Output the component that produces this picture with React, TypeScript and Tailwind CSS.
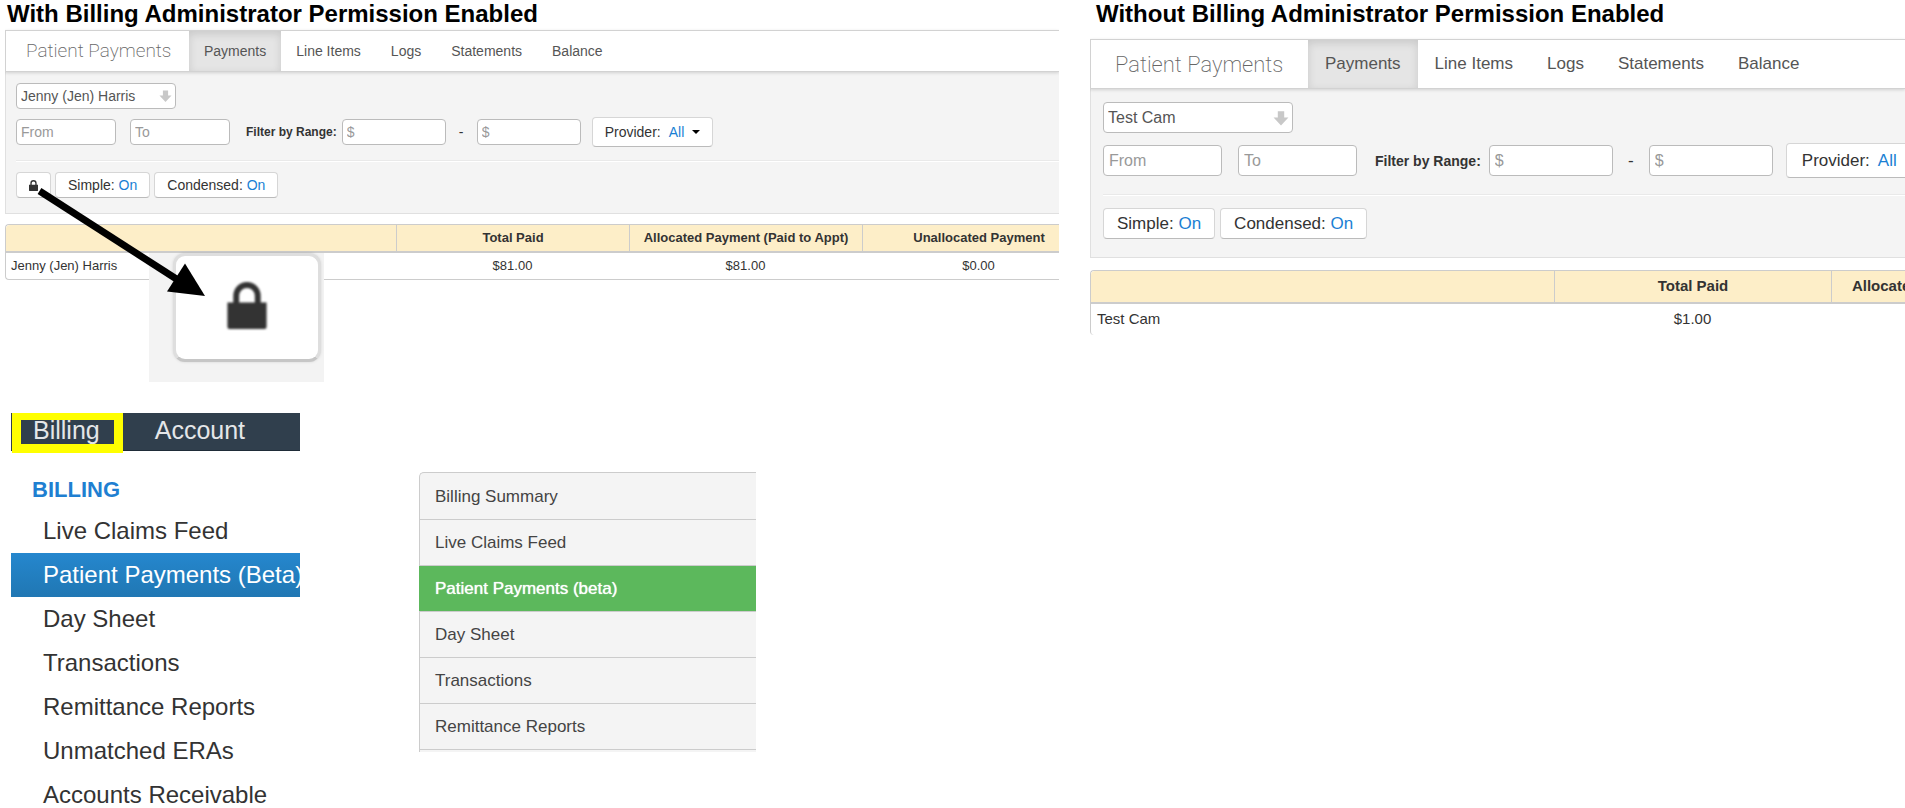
import { useId } from "react";

type Size = "sm" | "lg";

const styles = {
  sm: {
    heading: "pl-[2px] mb-[3px]",
    header: "h-[42px]",
    title: "w-[183px] pl-5 text-[19px]",
    tab: "px-[15px] text-sm",
    body: "px-[10px] pt-[11px] pb-[15px]",
    selectBox: "w-[160px]",
    select: "h-[26px] pl-1 text-sm",
    arrow: "right-1 size-[13px]",
    filters: "mt-2 h-[30px]",
    input: "h-[26px] pl-1 text-sm",
    date: "w-[100px] mr-[14px]",
    label: "ml-[2px] mr-[5px] text-xs",
    amount: "w-[104px]",
    dash: "w-[31px] text-sm",
    provider: "ml-[11px] h-[30px] px-3 text-sm",
    all: "ml-2 mr-2",
    rule: "mt-[13px]",
    buttons: "mt-[10px] gap-1",
    button: "h-[26px] px-[12px] text-sm",
    table: "mt-[10px] w-[1089px] border-b text-[13px]",
    first: "w-[390px] pl-[5px]",
    cell: "h-[26px]",
    col: "w-[233px]",
  },
  lg: {
    heading: "pl-[6px] mb-3",
    header: "h-[50px]",
    title: "w-[217px] pl-6 text-[22px]",
    tab: "px-[17px] text-[17px]",
    body: "px-3 pt-[13px] pb-[18px]",
    selectBox: "w-[190px]",
    select: "h-[31px] pl-1 text-[16px]",
    arrow: "right-1 size-4",
    filters: "mt-[10px] h-[35px]",
    input: "h-[31px] pl-[5px] text-[16px]",
    date: "w-[119px] mr-4",
    label: "ml-[2px] mr-2 text-sm",
    amount: "w-[124px]",
    dash: "w-[36px] text-[17px]",
    provider: "ml-[13px] h-[35px] px-[15px] text-[17px]",
    all: "ml-2 mr-[10px]",
    rule: "mt-4",
    buttons: "mt-3 gap-[5px]",
    button: "h-[31px] px-[13px] text-[17px]",
    table: "mt-3 w-[1294px] text-[15px]",
    first: "w-[463px] pl-[6px]",
    cell: "h-[31px]",
    col: "w-[277px]",
  },
};

const fieldClass =
  "rounded-[4px] border border-[#bbb] bg-white text-[#555] outline-none placeholder:text-[#999] placeholder:opacity-100";
const buttonClass =
  "flex shrink-0 items-center whitespace-nowrap rounded-[4px] border border-[#d6d6d6] border-b-[#bbb] bg-white text-[#333]";

function LockIcon({ className }: { className: string }) {
  return (
    <svg viewBox="0 0 40 48" className={className} aria-hidden="true">
      <path d="M9 24V14a11 11 0 0 1 22 0v10" fill="none" stroke="#333" strokeWidth="6" />
      <path d="M0 21h40v25a2 2 0 0 1-2 2H2a2 2 0 0 1-2-2z" fill="#333" />
    </svg>
  );
}

type PanelProps = {
  size: Size;
  heading: string;
  patient: string;
  total: string;
  allocated: string;
  unallocated: string;
  admin?: boolean;
};

function PaymentsPanel({ size, heading, patient, total, allocated, unallocated, admin }: PanelProps) {
  const s = styles[size];
  const id = useId();
  return (
    <section className="overflow-hidden">
      <h2 className={`${s.heading} whitespace-nowrap text-2xl leading-[27px] font-bold text-black`}>{heading}</h2>
      <div className={`${s.header} relative flex items-stretch border-y border-l border-[#d2d2d2] bg-white shadow-[0_1px_3px_rgba(0,0,0,0.15)]`}>
        <h3 className={`${s.title} flex shrink-0 items-center whitespace-nowrap font-['Roboto',sans-serif] font-extralight text-[#666]`}>
          Patient Payments
        </h3>
        <nav className="flex">
          {["Payments", "Line Items", "Logs", "Statements", "Balance"].map((tab, i) => (
            <a
              key={tab}
              href="#"
              className={`${s.tab} flex items-center whitespace-nowrap text-[#555] ${
                i === 0 ? "bg-[#e5e5e5] shadow-[inset_0_3px_8px_rgba(0,0,0,0.125)]" : ""
              }`}
            >
              {tab}
            </a>
          ))}
        </nav>
      </div>
      <div className={`${s.body} border-b border-l border-[#e0e0e0] bg-[#f4f4f4] pr-0`}>
        <div className={`${s.selectBox} relative`}>
          <select aria-label="Patient" className={`${fieldClass} ${s.select} block w-full appearance-none`}>
            <option>{patient}</option>
          </select>
          <svg viewBox="0 0 14 14" className={`${s.arrow} pointer-events-none absolute top-1/2 -translate-y-1/2`} aria-hidden="true">
            <path d="M4.200 1h5.600v5.500H13.500L7 13.500.5 6.500h3.700z" fill="#c8c8c8" />
          </svg>
        </div>
        <div className={`${s.filters} flex items-center`}>
          <input aria-label="From date" placeholder="From" className={`${fieldClass} ${s.input} ${s.date} shrink-0`} />
          <input aria-label="To date" placeholder="To" className={`${fieldClass} ${s.input} ${s.date} shrink-0`} />
          <label htmlFor={id} className={`${s.label} shrink-0 whitespace-nowrap font-bold text-[#333]`}>
            Filter by Range:
          </label>
          <input id={id} placeholder="$" className={`${fieldClass} ${s.input} ${s.amount} shrink-0`} />
          <span className={`${s.dash} shrink-0 text-center text-[#333]`}>-</span>
          <input aria-label="Maximum amount" placeholder="$" className={`${fieldClass} ${s.input} ${s.amount} shrink-0`} />
          <button type="button" className={`${buttonClass} ${s.provider}`}>
            Provider: <span className={`${s.all} text-[#1a7fd4]`}>All</span>
            <span className="border-x-4 border-t-4 border-x-transparent border-t-black" />
          </button>
        </div>
        <div className={`${s.rule} border-t border-b border-t-[#e9e9e9] border-b-white`} />
        <div className={`${s.buttons} flex`}>
          {admin && (
            <button type="button" aria-label="Lock" className={`${buttonClass} ${s.button}`}>
              <LockIcon className="h-[11px] w-[9px]" />
            </button>
          )}
          <button type="button" className={`${buttonClass} ${s.button}`}>
            Simple:&nbsp;<span className="text-[#1a7fd4]">On</span>
          </button>
          <button type="button" className={`${buttonClass} ${s.button}`}>
            Condensed:&nbsp;<span className="text-[#1a7fd4]">On</span>
          </button>
        </div>
      </div>
      <table className={`${s.table} table-fixed border-separate border-spacing-0 rounded-[4px] border-t border-l border-[#ccc] text-[#333]`}>
        <thead>
          <tr className="bg-[#fdeec8]">
            <th className={`${s.first} rounded-tl-[4px] border-b-2 border-[#ccc] py-0 pr-0`} />
            {["Total Paid", "Allocated Payment (Paid to Appt)", "Unallocated Payment"].map((name) => (
              <th key={name} className={`${s.col} border-b-2 border-l border-[#ccc] p-0 text-center font-bold whitespace-nowrap`}>
                <div className={`${s.cell} flex items-center justify-center`}>{name}</div>
              </th>
            ))}
          </tr>
        </thead>
        <tbody>
          <tr>
            <td className={`${s.first} ${s.cell} py-0 pr-0`}>{patient}</td>
            {[total, allocated, unallocated].map((value, i) => (
              <td key={i} className="p-0 text-center">{value}</td>
            ))}
          </tr>
        </tbody>
      </table>
    </section>
  );
}

function LockCallout() {
  return (
    <>
      <div className="absolute top-[253px] left-[149px] h-[129px] w-[175px] bg-[#f3f3f3] pl-[24px]">
        <div className="flex h-[109px] w-[148px] items-center justify-center rounded-[12px] border-[3px] border-[#dedede] border-b-[#c6c6c6] bg-white pb-[4px] shadow-[0_0_3px_rgba(0,0,0,0.12)]">
          <LockIcon className="h-[47px] w-[40px] blur-[1px]" />
        </div>
      </div>
      <svg viewBox="0 0 210 300" className="absolute top-0 left-0 h-[300px] w-[210px]" aria-label="Arrow to enlarged lock button">
        <path d="M39.500 191 178 280" stroke="#000" strokeWidth="7" fill="none" />
        <path d="M205 296 185 263.500 167 291.500z" fill="#000" />
      </svg>
    </>
  );
}

const billingItems = [
  "Live Claims Feed",
  "Patient Payments (Beta)",
  "Day Sheet",
  "Transactions",
  "Remittance Reports",
  "Unmatched ERAs",
  "Accounts Receivable",
];

function BillingDropdown() {
  return (
    <div className="w-[289px] shrink-0">
      <nav className="relative flex h-[38px] border-b border-[#1f2c38] bg-[#303f4d] text-[25px] leading-[35px] text-[#e4e6e8]">
        <a href="#" className="pl-[22px]">Billing</a>
        <a href="#" className="pl-[55px]">Account</a>
        <span className="absolute top-0 left-px h-10 w-[111px] border-x-[9px] border-t-[7px] border-b-[9px] border-[#ffff00]" />
      </nav>
      <h3 className="pt-[26px] pb-[6px] pl-[21px] text-[22px] leading-[26px] font-bold text-[#1f7fd1]">BILLING</h3>
      <ul>
        {billingItems.map((item, i) => (
          <li key={item} className="group">
            <a
              href="#"
              className={`block overflow-hidden py-[9px] pl-8 text-2xl leading-[26px] whitespace-nowrap group-last:pb-0 ${
                i === 1 ? "bg-linear-to-b from-[#2587ce] to-[#2077b3] text-white" : "text-[#333]"
              }`}
            >
              {item}
            </a>
          </li>
        ))}
      </ul>
    </div>
  );
}

const sideItems = [
  "Billing Summary",
  "Live Claims Feed",
  "Patient Payments (beta)",
  "Day Sheet",
  "Transactions",
  "Remittance Reports",
];

function BillingSideMenu() {
  return (
    <ul className="mt-[59px] w-[337px] shrink-0 self-start rounded-tl-[5px] border-t border-l border-[#ccc] bg-[#f4f4f4] pt-px pb-[2px]">
      {sideItems.map((item, i) => (
        <li
          key={item}
          className={
            i === 2
              ? "-ml-px border-b border-[#ccc] bg-[#5cb85c] pl-px text-white [text-shadow:0_0_1px_#fff]"
              : "border-b border-[#ccc] text-[#444]"
          }
        >
          <a href="#" className="block py-3 pl-[15px] text-[17px] leading-[21px]">
            {item}
          </a>
        </li>
      ))}
    </ul>
  );
}

export default function App() {
  return (
    <main className="relative grid grid-cols-[1054fr_815fr] gap-x-[31px] overflow-hidden bg-white pl-[5px] font-['Liberation_Sans',Arial,sans-serif]">
      <div className="min-w-0">
        <PaymentsPanel
          size="sm"
          heading="With Billing Administrator Permission Enabled"
          patient="Jenny (Jen) Harris"
          total="$81.00"
          allocated="$81.00"
          unallocated="$0.00"
          admin
        />
        <div className="mt-[133px] flex gap-[119px] pl-[6px]">
          <BillingDropdown />
          <BillingSideMenu />
        </div>
      </div>
      <div className="min-w-0">
        <PaymentsPanel
          size="lg"
          heading="Without Billing Administrator Permission Enabled"
          patient="Test Cam"
          total="$1.00"
          allocated=""
          unallocated=""
        />
      </div>
      <LockCallout />
    </main>
  );
}
